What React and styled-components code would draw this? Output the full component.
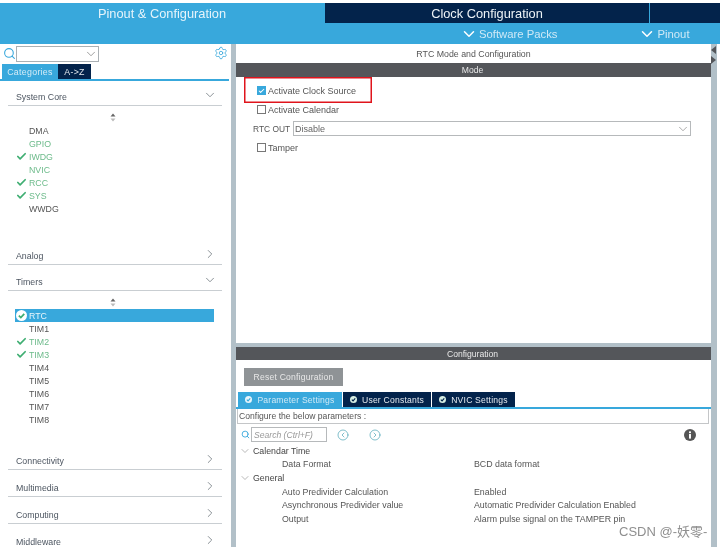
import React from 'react'
import styled, { createGlobalStyle } from 'styled-components'
import { ChevronDown, ChevronRight, Check, Search, Settings, CircleChevronLeft, CircleChevronRight } from 'lucide-react'

const BLUE = '#38a8dc'
const NAVY = '#03234b'
const GUTTER = '#b2c0c8'
const BAR = '#54565a'
const GREEN = '#3fae72'

const GlobalStyle = createGlobalStyle`
  html, body {
    margin: 0;
    padding: 0;
    background: #fff;
  }
  body {
    font-family: 'Liberation Sans', Arial, sans-serif;
    font-size: 9px;
    color: #555;
  }
`

const Page = styled.div`
  position: relative;
  width: 720px;
  height: 547px;
  padding-top: 3px;
  box-sizing: border-box;
  overflow: hidden;
  background: #fff;
  filter: blur(0.3px);
`

const Header = styled.div`
  height: 41px;
  background: ${BLUE};
`

const HeaderTabs = styled.div`
  display: flex;
  height: 20px;
`

const HeaderTab = styled.div`
  width: ${(p) => p.$width}px;
  height: 20px;
  margin-right: 1px;
  flex: none;
  display: flex;
  align-items: center;
  justify-content: center;
  color: ${(p) => (p.$active ? '#e6f4fb' : '#eef3f7')};
  background: ${(p) => (p.$active ? BLUE : NAVY)};
  font-size: 12.8px;
`

const HeaderTools = styled.div`
  height: 21px;
  display: flex;
  align-items: center;
  padding-left: 460px;
`

const HeaderTool = styled.div`
  display: flex;
  align-items: center;
  gap: 1px;
  margin-right: ${(p) => p.$gap || 0}px;
  font-size: 11.3px;
  color: #cfe9f6;
  svg {
    color: #fff;
  }
`

const Body = styled.div`
  display: flex;
  height: 503px;
`

const LeftPanel = styled.div`
  width: 231px;
  flex: none;
  height: 100%;
  overflow: hidden;
  background: #fff;
`

const Gutter = styled.div`
  width: 5px;
  flex: none;
  background: ${GUTTER};
`

const SideGutter = styled.div`
  width: 6px;
  flex: none;
  background: ${GUTTER};
  display: flex;
  flex-direction: column;
  align-items: flex-start;
  gap: 2px;
  padding-top: 2px;
  box-sizing: border-box;
`

const SearchRow = styled.div`
  height: 18px;
  margin-bottom: 2px;
  display: flex;
  align-items: center;
  padding: 1px 3px 0 3px;
  box-sizing: border-box;
  color: ${BLUE};
`

const ComboBox = styled.div`
  width: 83px;
  height: 16px;
  display: flex;
  align-items: center;
  justify-content: flex-end;
  box-sizing: border-box;
  border: 1px solid #aab0b4;
  color: #777;
`

const GearButton = styled.div`
  display: flex;
  margin-left: auto;
  margin-top: -2px;
  color: ${BLUE};
`

const CategoryTabs = styled.div`
  display: flex;
  height: 17px;
  width: 229px;
  padding-left: 2px;
  box-sizing: border-box;
  border-bottom: 2px solid ${BLUE};
`

const CategoryTab = styled.div`
  width: ${(p) => p.$width}px;
  height: 15px;
  display: flex;
  align-items: center;
  justify-content: center;
  font-size: 8.8px;
  letter-spacing: 0.3px;
  color: ${(p) => (p.$active ? '#d5ecf7' : '#e4e9ee')};
  background: ${(p) => (p.$active ? BLUE : NAVY)};
`

const SectionList = styled.div`
  padding: 0 9px 0 8px;
`

const SectionHeader = styled.div`
  height: 17px;
  margin-top: ${(p) => p.$top}px;
  display: flex;
  align-items: center;
  justify-content: space-between;
  padding: 0 5px 0 8px;
  border-bottom: 1px solid #c9ced2;
  color: #4c5560;
  font-size: 8.8px;
  svg {
    color: #7a8288;
    margin-top: -3px;
  }
`

const SortMark = styled.div`
  height: 18px;
  padding: 4px 4px 0 0;
  box-sizing: border-box;
  display: flex;
  align-items: center;
  justify-content: center;
  color: #777;
`

const ItemRow = styled.div`
  height: 13px;
  display: flex;
  align-items: center;
  width: 199px;
  margin-left: 7px;
  padding-left: 14px;
  box-sizing: border-box;
  position: relative;
  font-size: 8.8px;
  color: ${(p) => (p.$selected ? '#e8f5fb' : p.$green ? '#6dbb8b' : '#555')};
  background: ${(p) => (p.$selected ? BLUE : 'transparent')};
`

const ItemIcon = styled.span`
  position: absolute;
  left: 1px;
  top: 1px;
  display: flex;
  color: ${GREEN};
`

const RightColumn = styled.div`
  width: 475px;
  flex: none;
  display: flex;
  flex-direction: column;
`

const PanelTitle = styled.div`
  height: 19px;
  display: flex;
  align-items: center;
  justify-content: center;
  font-size: 8.8px;
  color: #555;
`

const BarTitle = styled.div`
  height: ${(p) => p.$height}px;
  padding-right: 2px;
  background: ${BAR};
  color: #e8e8e8;
  font-size: 8.6px;
  display: flex;
  align-items: center;
  justify-content: center;
`

const ModePanel = styled.div`
  height: 299px;
  background: #fff;
`

const ModeBody = styled.div`
  padding: 4px 0 0 21px;
`

const FieldRow = styled.div`
  height: 19px;
  display: flex;
  align-items: center;
  margin-left: ${(p) => p.$shift || 0}px;
  font-size: 9px;
  color: #555;
`

const FieldLabel = styled.span`
  width: 40px;
  flex: none;
  font-size: 8.4px;
`

const CheckBox = styled.span`
  width: 9px;
  height: 9px;
  margin-right: 2px;
  flex: none;
  box-sizing: border-box;
  display: flex;
  align-items: center;
  justify-content: center;
  color: #fff;
  background: ${(p) => (p.$checked ? BLUE : '#fff')};
  border: 1px solid ${(p) => (p.$checked ? BLUE : '#777')};
`

const SelectBox = styled.div`
  width: 398px;
  height: 15px;
  padding-left: 1px;
  box-sizing: border-box;
  display: flex;
  align-items: center;
  justify-content: space-between;
  border: 1px solid #b6b9bb;
  color: #666;
  svg {
    color: #888;
  }
`

const Highlight = styled.div`
  position: absolute;
  left: 244px;
  top: 77px;
  width: 128px;
  height: 26px;
  box-sizing: border-box;
  box-shadow: inset 0 0 0 1.5px #e0141c;
`

const HorizontalGutter = styled.div`
  height: 4px;
  flex: none;
  background: ${GUTTER};
`

const ConfigPanel = styled.div`
  flex: 1;
  background: #fff;
`

const ResetButton = styled.div`
  width: 99px;
  height: 18px;
  margin: 8px 0 6px 8px;
  display: flex;
  align-items: center;
  justify-content: center;
  background: #8f9396;
  color: #e8e8e8;
  font-size: 8.6px;
  letter-spacing: 0.2px;
`

const ConfigTabs = styled.div`
  display: flex;
  gap: 1px;
  padding-left: 2px;
  height: 15px;
  border-bottom: 2px solid ${BLUE};
`

const ConfigTab = styled.div`
  width: ${(p) => p.$width}px;
  height: 15px;
  display: flex;
  align-items: center;
  justify-content: center;
  gap: 5px;
  font-size: 8.6px;
  letter-spacing: 0.2px;
  color: ${(p) => (p.$active ? '#cfe9f6' : '#e4e9ee')};
  background: ${(p) => (p.$active ? BLUE : NAVY)};
`

const ConfigureRow = styled.div`
  height: 15px;
  margin: 0 2px 0 1px;
  padding-left: 1px;
  box-sizing: border-box;
  display: flex;
  align-items: center;
  border: 1px solid #c4c6c8;
  border-top: none;
  font-size: 8.6px;
  color: #555;
`

const SearchBar = styled.div`
  height: 15px;
  margin-top: 3px;
  padding: 0 15px 0 5px;
  display: flex;
  align-items: center;
  color: ${BLUE};
`

const SearchField = styled.div`
  width: 76px;
  height: 15px;
  margin-left: 1px;
  padding-left: 2px;
  box-sizing: border-box;
  display: flex;
  align-items: center;
  border: 1px solid #b6b9bb;
  font-style: italic;
  font-size: 8.6px;
  color: #999;
`

const NavIcon = styled.span`
  display: flex;
  margin-left: ${(p) => p.$left}px;
  color: #4aa3b5;
`

const InfoIcon = styled.svg`
  margin-left: auto;
`

const Tree = styled.div`
  margin-top: 2px;
`

const TreeRow = styled.div`
  height: 13.6px;
  display: flex;
  align-items: center;
  font-size: 8.8px;
  color: #555;
`

const TreeGroup = styled(TreeRow)`
  padding-left: 3px;
  gap: 2px;
  color: #444;
  svg {
    color: #888;
  }
`

const TreeName = styled.span`
  width: 192px;
  margin-left: 46px;
  flex: none;
`

const Watermark = styled.div`
  position: absolute;
  left: 619px;
  top: 521px;
  font-family: 'Liberation Sans', 'Noto Sans CJK SC', sans-serif;
  font-size: 13px;
  color: #8f8f8f;
  white-space: nowrap;
`

const Triangle = styled.span`
  width: 0;
  height: 0;
  border-top: 4px solid transparent;
  border-bottom: 4px solid transparent;
  border-${(p) => (p.$left ? 'right' : 'left')}: 5px solid #54565a;
`

const SortIcon = () => (
  <svg width="6" height="9" viewBox="0 0 6 9">
    <path d="M3 0.5 L5.5 3.6 H0.5 Z" fill="#666" />
    <path d="M3 8.5 L5.5 5.4 H0.5 Z" fill="#bbb" />
  </svg>
)

const CircleTick = ({ size = 10, ring = '#fff', tick = GREEN }) => (
  <svg width={size} height={size} viewBox="0 0 10 10">
    <circle cx="5" cy="5" r="5" fill={ring} />
    <path d="M2.6 5.1 L4.4 6.9 L7.5 3.5" fill="none" stroke={tick} strokeWidth="1.6" />
  </svg>
)

const systemCore = [
  { name: 'DMA' },
  { name: 'GPIO', green: true },
  { name: 'IWDG', green: true, checked: true },
  { name: 'NVIC', green: true },
  { name: 'RCC', green: true, checked: true },
  { name: 'SYS', green: true, checked: true },
  { name: 'WWDG' },
]

const timers = [
  { name: 'RTC', selected: true },
  { name: 'TIM1' },
  { name: 'TIM2', green: true, checked: true },
  { name: 'TIM3', green: true, checked: true },
  { name: 'TIM4' },
  { name: 'TIM5' },
  { name: 'TIM6' },
  { name: 'TIM7' },
  { name: 'TIM8' },
]

const Section = ({ title, top, open }) => (
  <SectionHeader $top={top}>
    {title}
    {open ? <ChevronDown size={14} strokeWidth={1.5} /> : <ChevronRight size={14} strokeWidth={1.5} />}
  </SectionHeader>
)

const Items = ({ items }) =>
  items.map((item) => (
    <ItemRow key={item.name} $green={item.green} $selected={item.selected}>
      {item.checked && (
        <ItemIcon>
          <Check size={11} strokeWidth={3.8} />
        </ItemIcon>
      )}
      {item.selected && (
        <ItemIcon>
          <CircleTick size={11} />
        </ItemIcon>
      )}
      {item.name}
    </ItemRow>
  ))

const App = () => {
  return (
    <Page>
      <GlobalStyle />
      <Header>
        <HeaderTabs>
          <HeaderTab $active $width={324}>Pinout &amp; Configuration</HeaderTab>
          <HeaderTab $width={324}>Clock Configuration</HeaderTab>
          <HeaderTab $width={70} />
        </HeaderTabs>
        <HeaderTools>
          <HeaderTool $gap={81}>
            <ChevronDown size={18} strokeWidth={2} />
            Software Packs
          </HeaderTool>
          <HeaderTool>
            <ChevronDown size={18} strokeWidth={2} />
            Pinout
          </HeaderTool>
        </HeaderTools>
      </Header>
      <Body>
        <LeftPanel>
          <SearchRow>
            <Search size={13} strokeWidth={2} />
            <ComboBox>
              <ChevronDown size={14} strokeWidth={1.2} />
            </ComboBox>
            <GearButton>
              <Settings size={14} strokeWidth={1.4} />
            </GearButton>
          </SearchRow>
          <CategoryTabs>
            <CategoryTab $active $width={56}>Categories</CategoryTab>
            <CategoryTab $width={33}>A-&gt;Z</CategoryTab>
          </CategoryTabs>
          <SectionList>
            <Section title="System Core" top={7} open />
            <SortMark><SortIcon /></SortMark>
            <Items items={systemCore} />
            <Section title="Analog" top={32} />
            <Section title="Timers" top={8} open />
            <SortMark><SortIcon /></SortMark>
            <Items items={timers} />
            <Section title="Connectivity" top={26} />
            <Section title="Multimedia" top={9} />
            <Section title="Computing" top={9} />
            <Section title="Middleware" top={9} />
          </SectionList>
        </LeftPanel>
        <Gutter />
        <RightColumn>
          <ModePanel>
            <PanelTitle>RTC Mode and Configuration</PanelTitle>
            <BarTitle $height={14}>Mode</BarTitle>
            <ModeBody>
              <FieldRow>
                <CheckBox $checked><Check size={8} strokeWidth={3.5} /></CheckBox>
                Activate Clock Source
              </FieldRow>
              <FieldRow>
                <CheckBox />
                Activate Calendar
              </FieldRow>
              <FieldRow $shift={-4}>
                <FieldLabel>RTC OUT</FieldLabel>
                <SelectBox>
                  Disable
                  <ChevronDown size={14} strokeWidth={1.2} />
                </SelectBox>
              </FieldRow>
              <FieldRow>
                <CheckBox />
                Tamper
              </FieldRow>
            </ModeBody>
          </ModePanel>
          <HorizontalGutter />
          <ConfigPanel>
            <BarTitle $height={13}>Configuration</BarTitle>
            <ResetButton>Reset Configuration</ResetButton>
            <ConfigTabs>
              <ConfigTab $active $width={104}><CircleTick size={7} ring="#e8f5fb" tick={BLUE} />Parameter Settings</ConfigTab>
              <ConfigTab $width={88}><CircleTick size={7} ring="#d8efe4" tick={NAVY} />User Constants</ConfigTab>
              <ConfigTab $width={83}><CircleTick size={7} ring="#d8efe4" tick={NAVY} />NVIC Settings</ConfigTab>
            </ConfigTabs>
            <ConfigureRow>Configure the below parameters :</ConfigureRow>
            <SearchBar>
              <Search size={9} strokeWidth={2.4} />
              <SearchField>Search (Ctrl+F)</SearchField>
              <NavIcon $left={10}><CircleChevronLeft size={12} strokeWidth={1.4} /></NavIcon>
              <NavIcon $left={20}><CircleChevronRight size={12} strokeWidth={1.4} /></NavIcon>
              <InfoIcon width="12" height="12" viewBox="0 0 11 11">
                <circle cx="5.5" cy="5.5" r="5.5" fill="#555" />
                <rect x="4.6" y="4.6" width="1.8" height="4.2" fill="#fff" />
                <rect x="4.6" y="2.2" width="1.8" height="1.6" fill="#fff" />
              </InfoIcon>
            </SearchBar>
            <Tree>
              <TreeGroup><ChevronDown size={12} strokeWidth={1.2} />Calendar Time</TreeGroup>
              <TreeRow><TreeName>Data Format</TreeName>BCD data format</TreeRow>
              <TreeGroup><ChevronDown size={12} strokeWidth={1.2} />General</TreeGroup>
              <TreeRow><TreeName>Auto Predivider Calculation</TreeName>Enabled</TreeRow>
              <TreeRow><TreeName>Asynchronous Predivider value</TreeName>Automatic Predivider Calculation Enabled</TreeRow>
              <TreeRow><TreeName>Output</TreeName>Alarm pulse signal on the TAMPER pin</TreeRow>
            </Tree>
          </ConfigPanel>
        </RightColumn>
        <SideGutter>
          <Triangle $left />
          <Triangle />
        </SideGutter>
      </Body>
      <Highlight />
      <Watermark>CSDN @-妖零-</Watermark>
    </Page>
  )
}

export default App
